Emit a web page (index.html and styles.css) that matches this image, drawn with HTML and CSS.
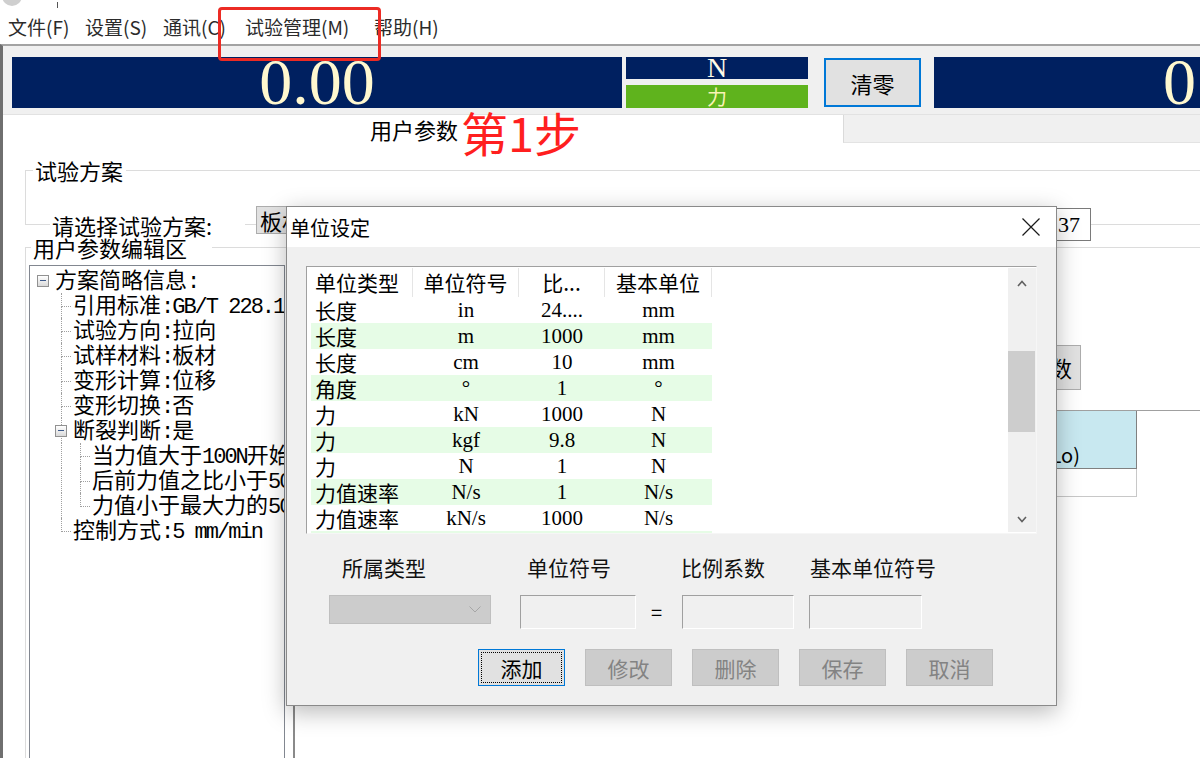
FILE: index.html
```html
<!DOCTYPE html>
<html lang="zh-CN">
<head>
<meta charset="utf-8">
<title>单位设定</title>
<link rel="stylesheet" href="styles.css">
</head>
<body>
<div class="screen">
  <div class="titlestrip"><span class="appicon"></span><span class="titletick"></span></div>
  <nav class="menubar">
    <span class="mi mi-file">文件(F)</span>
    <span class="mi mi-set">设置(S)</span>
    <span class="mi mi-com">通讯(C)</span>
    <span class="mi mi-test">试验管理(M)</span>
    <span class="mi mi-help">帮助(H)</span>
  </nav>
  <div class="app">
    <div class="display">
      <div class="lcd lcd-main">0.00</div>
      <div class="unitpanel">
        <div class="unit-n">N</div>
        <div class="unit-f">力</div>
      </div>
      <button class="zero-btn">清零</button>
      <div class="lcd lcd-right">0</div>
    </div>
    <div class="tabrow">
      <div class="tab-label">用户参数</div>
      <div class="tab-bar"></div>
    </div>
    <fieldset class="group group-plan">
      <legend>试验方案</legend>
      <div class="plan-row">
        <span class="plan-label">请选择试验方案:</span>
        <span class="plan-combo">板材拉伸</span>
        <span class="plan-input">137</span>
      </div>
    </fieldset>
    <fieldset class="group group-edit">
      <legend>用户参数编辑区</legend>
      <div class="edit-body">
        <div class="tree">
          <div class="tn tn-root"><span class="exp"></span><span class="tt">方案简略信息<span class="lat">:</span></span></div>
          <div class="tn tn-l1"><span class="cn"></span><span class="tt">引用标准<span class="lat">:GB/T 228.1-2010</span></span></div>
          <div class="tn tn-l1"><span class="cn"></span><span class="tt">试验方向<span class="lat">:</span>拉向</span></div>
          <div class="tn tn-l1"><span class="cn"></span><span class="tt">试样材料<span class="lat">:</span>板材</span></div>
          <div class="tn tn-l1"><span class="cn"></span><span class="tt">变形计算<span class="lat">:</span>位移</span></div>
          <div class="tn tn-l1"><span class="cn"></span><span class="tt">变形切换<span class="lat">:</span>否</span></div>
          <div class="tn tn-l1 tn-parent"><span class="cn"><span class="exp"></span></span><span class="tt">断裂判断<span class="lat">:</span>是</span></div>
          <div class="tn tn-l2"><span class="vl"></span><span class="cn"></span><span class="tt">当力值大于<span class="lat">100N</span>开始判断</span></div>
          <div class="tn tn-l2"><span class="vl"></span><span class="cn"></span><span class="tt">后前力值之比小于<span class="lat">50%</span></span></div>
          <div class="tn tn-l2 tn-last"><span class="vl"></span><span class="cn"></span><span class="tt">力值小于最大力的<span class="lat">50%</span></span></div>
          <div class="tn tn-l1 tn-last"><span class="cn"></span><span class="tt">控制方式<span class="lat">:5 mm/min</span></span></div>
        </div>
        <div class="rpanel">
          <div class="rp-btnrow"><span class="rp-btn">参数</span></div>
          <div class="rp-table">
            <div class="rp-head"><span class="rp-hcell">原始标距(Lo)</span></div>
            <div class="rp-row"><span class="rp-cell"></span></div>
          </div>
        </div>
      </div>
    </fieldset>
  </div>

  <div class="annot-box"></div>
  <div class="annot-step">第1步</div>

  <div class="dialog">
    <div class="dlg-title">
      <span class="dlg-caption">单位设定</span>
      <svg class="dlg-close" viewBox="0 0 18 18" width="18" height="18"><path d="M0.5 0.5 L17.5 17.5 M17.5 0.5 L0.5 17.5" stroke="#1a1a1a" stroke-width="1.2" fill="none"/></svg>
    </div>
    <div class="dlg-body">
      <div class="lv">
        <div class="lv-main">
          <div class="lv-head"><span class="h1">单位类型</span><span class="h2">单位符号</span><span class="h3">比...</span><span class="h4">基本单位</span></div>
          <div class="lv-row"><span class="c1">长度</span><span class="c2">in</span><span class="c3">24....</span><span class="c4">mm</span></div>
          <div class="lv-row alt"><span class="c1">长度</span><span class="c2">m</span><span class="c3">1000</span><span class="c4">mm</span></div>
          <div class="lv-row"><span class="c1">长度</span><span class="c2">cm</span><span class="c3">10</span><span class="c4">mm</span></div>
          <div class="lv-row alt"><span class="c1">角度</span><span class="c2">°</span><span class="c3">1</span><span class="c4">°</span></div>
          <div class="lv-row"><span class="c1">力</span><span class="c2">kN</span><span class="c3">1000</span><span class="c4">N</span></div>
          <div class="lv-row alt"><span class="c1">力</span><span class="c2">kgf</span><span class="c3">9.8</span><span class="c4">N</span></div>
          <div class="lv-row"><span class="c1">力</span><span class="c2">N</span><span class="c3">1</span><span class="c4">N</span></div>
          <div class="lv-row alt"><span class="c1">力值速率</span><span class="c2">N/s</span><span class="c3">1</span><span class="c4">N/s</span></div>
          <div class="lv-row"><span class="c1">力值速率</span><span class="c2">kN/s</span><span class="c3">1000</span><span class="c4">N/s</span></div>
          <div class="lv-row alt"><span class="c1">力值速率</span><span class="c2">kgf/s</span><span class="c3">9.8</span><span class="c4">N/s</span></div>
        </div>
        <div class="lv-scroll">
          <div class="sb-btn sb-up"><svg viewBox="0 0 10 7" width="10" height="7"><polyline points="1,6 5,1.5 9,6" fill="none" stroke="#606060" stroke-width="1.6"/></svg></div>
          <div class="sb-track"><div class="sb-thumb"></div></div>
          <div class="sb-btn sb-down"><svg viewBox="0 0 10 7" width="10" height="7"><polyline points="1,1 5,5.5 9,1" fill="none" stroke="#606060" stroke-width="1.6"/></svg></div>
        </div>
      </div>
      <div class="form">
        <span class="fl fl-type">所属类型</span>
        <span class="fl fl-sym">单位符号</span>
        <span class="fl fl-ratio">比例系数</span>
        <span class="fl fl-base">基本单位符号</span>
        <div class="combo"><svg viewBox="0 0 12 7" width="12" height="7"><polyline points="0.5,0.5 6,6 11.5,0.5" fill="none" stroke="#a6a6a6" stroke-width="1"/></svg></div>
        <div class="inp inp-sym"></div>
        <span class="eq">=</span>
        <div class="inp inp-ratio"></div>
        <div class="inp inp-base"></div>
      </div>
      <div class="btns">
        <button class="btn btn-primary">添加</button>
        <button class="btn">修改</button>
        <button class="btn">删除</button>
        <button class="btn">保存</button>
        <button class="btn">取消</button>
      </div>
    </div>
  </div>
</div>
</body>
</html>
```
FILE: styles.css
```css
* { box-sizing: border-box; }
html, body { margin: 0; padding: 0; }
body {
  width: 1200px;
  height: 758px;
  overflow: hidden;
  background: #fff;
  color: #000;
  font-family: "Noto Sans CJK SC", sans-serif;
}
.screen { width: 1200px; height: 758px; overflow: hidden; position: relative; }

/* window title strip */
.titlestrip { height: 8px; display: flex; align-items: flex-end; overflow: hidden; }
.appicon { width: 20px; height: 20px; border-radius: 50%; background: #cfcfcf; margin: 0 0 2px 2px; flex: none; }
.titletick { width: 1px; height: 6px; background: #555; margin-left: 35px; }

/* menu */
.menubar { height: 36px; display: flex; align-items: center; padding-left: 8px; font-size: 19px; color: #2b2b2b; }
.mi { white-space: nowrap; flex: none; }
.mi-file { width: 77px; }
.mi-set { width: 78px; }
.mi-com { width: 82px; }
.mi-test { width: 129px; }

/* main window */
.app { border-top: 2px solid #a3a3a3; border-left: 3px solid #6f6f6f; height: 714px; overflow: hidden; }

.display {
  height: 69px;
  background: #f0f0f0;
  border-bottom: 1px solid #e2e2e2;
  display: flex;
  align-items: flex-start;
  padding: 11px 0 0 9px;
  overflow: hidden;
}
.lcd {
  background: #002060;
  color: #fff8cf;
  font-family: "Liberation Serif", serif;
  height: 51px;
  line-height: 50px;
  font-size: 66px;
  white-space: nowrap;
}
.lcd-main { width: 610px; text-align: center; flex: none; }
.lcd-right { flex: 1; margin-left: 13px; text-align: right; padding-right: 4px; }
.unitpanel { width: 182px; margin-left: 4px; display: flex; flex-direction: column; gap: 6px; flex: none; }
.unit-n {
  height: 22px; background: #002060; color: #fffbe8;
  font-family: "Liberation Serif", serif; font-size: 28px; line-height: 22px;
  text-align: center;
}
.unit-f {
  height: 23px; background: #5fb31d; color: #f9f3b5;
  font-size: 20px; line-height: 23px; text-align: center;
}
.zero-btn {
  width: 97px; height: 49px; margin: 1px 0 0 16px; padding: 0; flex: none;
  background: #e1e1e1; border: 2px solid #0078d7;
  font-family: "Noto Sans CJK SC", sans-serif; font-size: 22px; color: #000;
}

.tabrow { display: flex; height: 28px; }
.tab-label { margin-left: 367px; font-size: 22px; line-height: 28px; white-space: nowrap; }
.tab-bar { margin-left: auto; width: 357px; background: #f0f0f0; border-left: 1px solid #dadada; border-bottom: 1px solid #e3e3e3; }

/* group boxes */
.group { margin: 0 0 0 22px; padding: 0; border: 1px solid #dcdcdc; border-right: none; min-width: 0; }
.group legend { padding: 0 3px 0 2px; margin-left: 7px; font-size: 22px; line-height: 26px; }
.group-plan { margin-top: 14px; }
.group-edit { margin-top: 9px; }
.group-edit legend { margin-left: 5px; padding-right: 25px; }

.plan-row { display: flex; align-items: flex-start; height: 18px; margin-top: 23px; padding-left: 24px; }
.plan-label {
  width: 195px; padding-left: 2px; margin-top: 5px; background: #fff;
  font-size: 22px; line-height: 28px; white-space: nowrap; flex: none;
}
.plan-combo {
  margin-left: 11px; width: 120px; height: 28px; flex: none;
  background: #e1e1e1; border: 1px solid #adadad;
  font-size: 22px; line-height: 26px; padding-left: 3px; white-space: nowrap; overflow: hidden;
}
.plan-input {
  margin: 2px 109px 0 auto; width: 91px; height: 33px; flex: none;
  border: 1px solid #7a7a7a; background: #fff;
  font-family: "Liberation Serif", serif; font-size: 22px; line-height: 31px;
  text-align: right; padding-right: 10px;
}

.edit-body { display: flex; height: 500px; padding-top: 5px; }

/* tree */
.tree {
  width: 256px; margin-left: 3px; flex: none;
  border: 1px solid #828790; background: #fff;
  overflow: hidden; padding-top: 2px; white-space: nowrap;
  font-size: 22px;
}
.tn { display: flex; align-items: center; height: 25px; line-height: 25px; }
.tn-root { padding-left: 7px; }
.tn-root .tt { margin-left: 6px; }
.tn-l1, .tn-l2 { padding-left: 31px; }
.tt { margin-left: 2px; }
.lat { font-family: "Liberation Mono", monospace; letter-spacing: -2px; }
.cn { display: flex; flex-direction: column; width: 10px; height: 25px; flex: none; }
.cn::before { content: ""; height: 13px; border-left: 1px dotted #a0a0a0; border-bottom: 1px dotted #a0a0a0; }
.cn::after { content: ""; flex: 1; border-left: 1px dotted #a0a0a0; }
.tn-last .cn::after { border-left-color: transparent; }
.vl { width: 19px; height: 25px; border-left: 1px dotted #a0a0a0; flex: none; }
.tn-parent .cn { flex-direction: row; align-items: center; border-left: 1px dotted #a0a0a0; }
.tn-parent .cn::before, .tn-parent .cn::after { display: none; }
.tn-parent .exp { margin-left: -7px; }
.exp {
  width: 12px; height: 12px; flex: none;
  border: 1px solid #919191;
  background: linear-gradient(#ffffff, #d9d9d9);
  display: flex; align-items: center; justify-content: center;
}
.exp::before { content: ""; width: 6px; height: 1px; background: #3d5a8a; }

/* right panel behind dialog */
.rpanel { flex: 1; margin-left: 8px; border-left: 2px solid #8a8a8a; }
.rp-btnrow { display: flex; justify-content: flex-end; padding-right: 119px; margin-top: 80px; }
.rp-btn {
  width: 81px; height: 45px; background: #e1e1e1; border: 1px solid #adadad;
  font-size: 22px; line-height: 43px; text-align: right; padding-right: 8px; white-space: nowrap;
}
.rp-table { margin-top: 20px; border-top: 1px solid #a0a0a0; }
.rp-head, .rp-row { display: flex; justify-content: flex-end; padding-right: 63px; }
.rp-hcell {
  width: 200px; height: 58px; background: #c8e8f0;
  border-right: 1px solid #808080; border-bottom: 1px solid #808080;
  display: flex; align-items: flex-end; justify-content: flex-end;
  padding: 0 56px 1px 0; font-size: 20px; line-height: 24px; white-space: nowrap;
}
.rp-cell { width: 200px; height: 28px; border: 1px solid #c8c8c8; border-top: none; background: #fff; }

/* annotations */
.annot-box { position: absolute; left: 218px; top: 7px; width: 163px; height: 54px; border: 3px solid #ec2b24; border-radius: 4px; }
.annot-step { position: absolute; left: 461px; top: 105px; font-size: 47px; line-height: 54px; color: #ff1f1f; white-space: nowrap; }

/* dialog */
.dialog {
  position: absolute; left: 286px; top: 206px; width: 771px; height: 500px;
  background: #f0f0f0; border: 1px solid #8a8a8a;
  box-shadow: 0 6px 22px rgba(0, 0, 0, 0.28);
  display: flex; flex-direction: column;
}
.dlg-title { height: 40px; background: #fff; display: flex; align-items: center; padding-left: 3px; flex: none; }
.dlg-caption { font-size: 20px; }
.dlg-close { margin-left: auto; margin-right: 16px; }
.dlg-body { padding: 19px 19px 0; }

.lv {
  width: 731px; height: 268px; display: flex;
  border: 1px solid; border-color: #a0a0a0 #f6f6f6 #f6f6f6 #a0a0a0;
  background: #fff;
}
.lv-main { flex: 1; padding: 1px 0 0 1px; overflow: hidden; }
.lv-head { display: flex; height: 29px; }
.lv-head span { border-right: 1px solid #e5e5e5; text-align: center; font-size: 21px; line-height: 28px; white-space: nowrap; flex: none; }
.lv-head .h1 { width: 105px; text-align: left; padding-left: 7px; }
.lv-head .h2 { width: 106px; }
.lv-head .h3 { width: 86px; }
.lv-head .h4 { width: 107px; }
.lv-row { display: flex; height: 26px; margin-left: 3px; width: 401px; font-size: 21px; line-height: 26px; white-space: nowrap; }
.lv-row.alt { background: #e6fce6; }
.lv-row span { flex: none; text-align: center; }
.lv-row .c1 { width: 102px; text-align: left; padding-left: 4px; }
.lv-row .c2, .lv-row .c3, .lv-row .c4 { font-family: "Liberation Serif", serif; }
.lv-row .c2 { width: 106px; }
.lv-row .c3 { width: 86px; }
.lv-row .c4 { width: 107px; }

.lv-scroll { width: 28px; flex: none; margin: 1px 0; background: #f0f0f0; display: flex; flex-direction: column; }
.sb-btn { display: flex; align-items: center; justify-content: center; flex: none; }
.sb-up { height: 30px; }
.sb-down { height: 26px; }
.sb-track { flex: 1; }
.sb-thumb { margin-top: 53px; height: 81px; width: 27px; background: #cdcdcd; }

.form {
  display: grid;
  grid-template-columns: 162px 29px 116px 46px 112px 15px 113px;
  grid-template-rows: 28px 34px;
  row-gap: 14px;
  margin: 19px 0 0 23px;
  font-size: 21px;
}
.fl { grid-row: 1; line-height: 28px; white-space: nowrap; color: #111; }
.fl-type { grid-column: 1; margin-left: 13px; }
.fl-sym { grid-column: 3; margin-left: 7px; }
.fl-ratio { grid-column: 5; margin-left: -1px; }
.fl-base { grid-column: 7; margin-left: 1px; }
.combo {
  grid-row: 2; grid-column: 1; height: 29px;
  background: #cccccc; border: 1px solid #bfbfbf;
  display: flex; align-items: center; justify-content: flex-end; padding-right: 9px;
}
.inp { grid-row: 2; height: 34px; border: 1px solid; border-color: #a0a0a0 #ffffff #ffffff #a0a0a0; }
.inp-sym { grid-column: 3; }
.inp-ratio { grid-column: 5; }
.inp-base { grid-column: 7; }
.eq { grid-row: 2; grid-column: 4; margin-left: 15px; line-height: 34px; font-size: 20px; }

.btns { display: flex; gap: 20px; margin-top: 20px; padding-left: 172px; }
.btn {
  width: 87px; height: 37px; padding: 0; flex: none;
  font-family: "Noto Sans CJK SC", sans-serif; font-size: 21px;
  background: #cccccc; border: 1px solid #bfbfbf; color: #838383;
}
.btn-primary { background: #e1e1e1; border-color: #0078d7; color: #000; outline: 1px dotted #000; outline-offset: -4px; }
```
